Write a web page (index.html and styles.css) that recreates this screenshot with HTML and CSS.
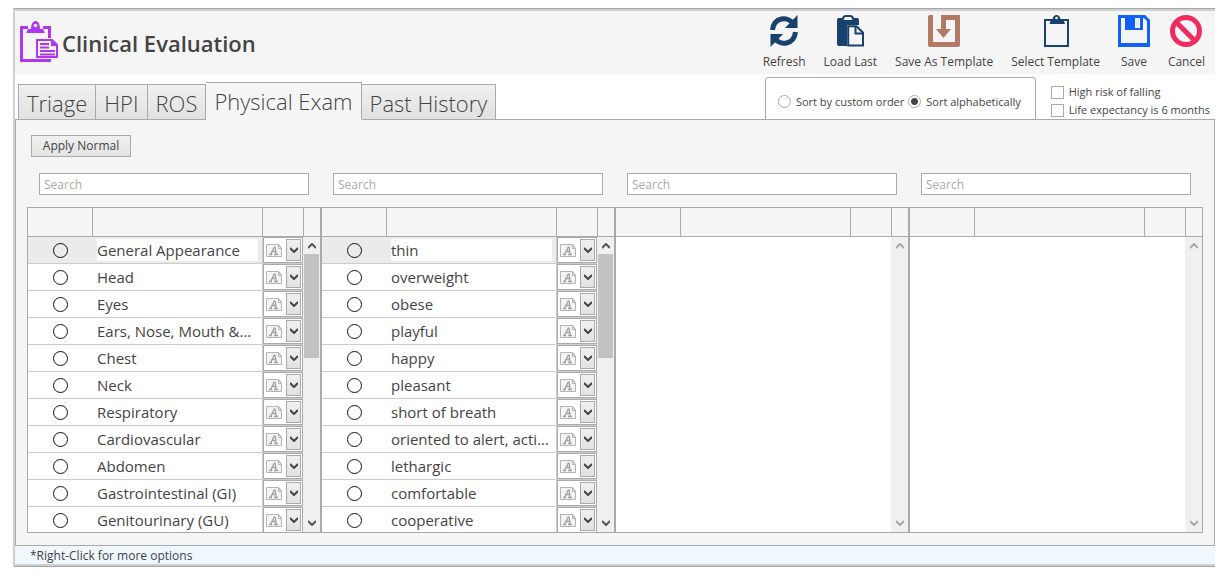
FILE: index.html
```
<!DOCTYPE html>
<html lang="en">
<head>
  <meta charset="UTF-8">
  <meta name="viewport" content="width=device-width, initial-scale=1.0">
  <title>Clinical Evaluation</title>
  <link rel="stylesheet" href="styles.css">
</head>
<body>
  <svg class="sprite" width="0" height="0">
    <symbol id="up" viewBox="0 0 8 6"><path d="M0 5 4 1 8 5" fill="none" stroke="currentColor" stroke-width="2"/></symbol>
    <symbol id="down" viewBox="0 0 8 6"><path d="M0 1 4 5 8 1" fill="none" stroke="currentColor" stroke-width="2"/></symbol>
    <symbol id="note" viewBox="0 0 17 13">
      <path d="M.5.5h12M.5.5v12h15v-8M12.5.5v4h3zM12.5.5l3 4" fill="#f4f4f4" stroke="#b4b4b4"/>
      <path d="M1 1h11v4h3v7H1z" fill="#f4f4f4"/>
      <path d="M3 10.500h3M8 10.500h4M4.500 10.500l4-8M9 2.500l1.200 8M6 7.500h4" fill="none" stroke="#a0a0a0" stroke-width="1.300"/>
    </symbol>
  </svg>

  <div class="window">
    <header class="header">
      <svg class="logo" viewBox="0 0 38 41" width="38" height="41">
        <path d="M0 5h8v3H3v30h28v3H0zM23 5h8v12h-3V8h-5z" fill="#b136f2"/>
        <path d="M6 12l2-4h3c0-4 1.500-8 4.500-8S20 4 20 8h3l2 4z" fill="#b136f2"/>
        <circle cx="15.500" cy="4.500" r="1.800" fill="#f5f5f5"/>
        <path d="M17 19h15l5 5v12H17z" fill="#f5f5f5" stroke="#b136f2" stroke-width="2"/>
        <path d="M31 18v7h7z" fill="#b136f2"/>
        <path d="M20 23h9M20 26.500h9M20 30h15M20 33.500h15" stroke="#b136f2" stroke-width="2"/>
      </svg>
      <h1>Clinical Evaluation</h1>

      <div class="toolbar">
        <button type="button">
          <svg viewBox="0 0 32 32">
            <g fill="none" stroke="#19416e" stroke-width="5"><path d="M4.500 15C6 2 20 1 25 8.500M27.500 17C26 30 12 31 7 23.500"/></g>
            <path d="M29.500 0v13H17zM2.500 32V19H15z" fill="#19416e"/>
          </svg>
          Refresh
        </button>
        <button type="button">
          <svg viewBox="0 0 32 32">
            <path d="M3 5q0-2 2-2h3q1-3 4-3h4q3 0 4 3h3q2 0 2 2v5H13v21H5q-2 0-2-2z" fill="#19416e"/>
            <path d="M9.500 5l1.500-3h6l1.500 3z" fill="#f5f5f5"/>
            <path d="M14.200 11.200h8.300l6.500 6.500v12.800H14.200z" fill="#f5f5f5" stroke="#19416e" stroke-width="2"/>
            <path d="M21.500 11v7.500h7.500" fill="none" stroke="#19416e" stroke-width="2"/>
          </svg>
          Load Last
        </button>
        <button type="button">
          <svg viewBox="0 0 32 32">
            <path d="M5 0v27h22V5h-9v9h5l-7.500 9L8 14h5V0h19v30q0 2-2 2H2q-2 0-2-2V2q0-2 2-2z" fill="#b27a66"/>
          </svg>
          Save As Template
        </button>
        <button type="button">
          <svg viewBox="0 0 32 32">
            <path d="M5 5h23v26H5z" fill="none" stroke="#19416e" stroke-width="2"/>
            <path d="M4 4h8.500Q13.500 0 16.500 0t4 4H29v2h-5l1 3H9.500l1-3H4z" fill="#19416e"/>
            <circle cx="16.500" cy="3" r="1.300" fill="#f5f5f5"/>
          </svg>
          Select Template
        </button>
        <button type="button">
          <svg viewBox="0 0 32 32">
            <path d="M0 0h27l5 5v27H0z" fill="#0f62f5"/>
            <path d="M3 3h4v12h18V3h1l3 3v22H3z" fill="#f5f5f5"/>
            <path d="M17 3h5v10h-5z" fill="#f5f5f5"/>
            <path d="M18.500 4.500h2v7h-2z" fill="#d8e4f8"/>
          </svg>
          Save
        </button>
        <button type="button">
          <svg viewBox="0 0 32 32">
            <path d="M5 6l21 21" stroke="#ef2b5f" stroke-width="5"/>
            <circle cx="16" cy="16" r="13.500" fill="none" stroke="#ef2b5f" stroke-width="5"/>
          </svg>
          Cancel
        </button>
      </div>
    </header>

    <div class="tab-row">
      <nav class="tabs" role="tablist">
        <button type="button" role="tab">Triage</button>
        <button type="button" role="tab">HPI</button>
        <button type="button" role="tab">ROS</button>
        <button type="button" role="tab" class="active" aria-selected="true">Physical Exam</button>
        <button type="button" role="tab">Past History</button>
      </nav>
      <div class="sort">
        <label><input type="radio" name="sort">Sort by custom order</label>
        <label><input type="radio" name="sort" checked>Sort alphabetically</label>
      </div>
      <div class="flags">
        <label><input type="checkbox">High risk of falling</label>
        <label><input type="checkbox">Life expectancy is 6 months</label>
      </div>
    </div>

    <main class="panel">
      <button type="button" class="apply">Apply Normal</button>
      <div class="columns" id="columns"></div>
    </main>

    <footer class="footer">*Right-Click for more options</footer>
  </div>

  <script>
    const lists = [
      ['General Appearance', 'Head', 'Eyes', 'Ears, Nose, Mouth &...', 'Chest', 'Neck', 'Respiratory',
        'Cardiovascular', 'Abdomen', 'Gastrointestinal (GI)', 'Genitourinary (GU)'],
      ['thin', 'overweight', 'obese', 'playful', 'happy', 'pleasant', 'short of breath',
        'oriented to alert, acti...', 'lethargic', 'comfortable', 'cooperative'],
      [],
      []
    ];

    const escapeText = (s) => s.replace(/&/g, '&amp;');
    const icon = (id, w, h) => `<svg class="${id}" width="${w}" height="${h}"><use href="#${id}"/></svg>`;

    const row = (name, col, i) => `
      <tr class="${i === 0 ? 'selected' : ''}">
        <td class="pick"><input type="radio" name="col${col}" id="c${col}r${i}"></td>
        <td class="name"><label for="c${col}r${i}">${escapeText(name)}</label></td>
        <td class="note-cell">
          <div class="combo">
            ${icon('note', 17, 13)}
            <span class="drop">
              <select aria-label="Note for ${escapeText(name)}"><option></option></select>
              ${icon('down', 8, 6)}
            </span>
          </div>
        </td>
      </tr>`;

    // One search box and one list per column
    document.getElementById('columns').innerHTML = lists.map((list, col) => `
      <section class="column">
        <input type="text" class="search" placeholder="Search" aria-label="Search list ${col + 1}">
        <div class="pane">
          <table>
            <thead><tr><th class="pick"></th><th></th><th class="note-cell"></th></tr></thead>
            <tbody>${list.map((name, i) => row(name, col, i)).join('')}</tbody>
          </table>
          <div class="side">
            <div class="side-head"></div>
            <div class="scrollbar ${list.length ? '' : 'disabled'}">
              ${icon('up', 8, 6)}
              <div class="track">${list.length ? '<div class="thumb"></div>' : ''}</div>
              ${icon('down', 8, 6)}
            </div>
          </div>
        </div>
      </section>`).join('');
  </script>
</body>
</html>
```
FILE: styles.css
```
* {
  box-sizing: border-box;
}

body {
  margin: 0;
  height: 100vh;
  padding: 8px 15px 13px 13px;
  background: #fff;
  color: #444;
  font-family: "Segoe UI", "Open Sans", "Noto Sans", sans-serif;
  font-size: 12px;
  line-height: 18px;
}

button,
input,
select {
  font: inherit;
  color: inherit;
  margin: 0;
}

.sprite {
  display: block;
}

.window {
  height: 100%;
  display: flex;
  flex-direction: column;
  border-left: 2px solid #d0d0d0;
  border-top: 1px solid #a6a6a6;
  border-bottom: 1px solid #a6a6a6;
}

/* Header */
.header {
  display: flex;
  height: 65px;
  padding: 0 10px 0 5px;
  border-top: 2px solid #d0d0d0;
  background: #f5f5f5;
}

.logo {
  margin-top: 10px;
}

h1 {
  flex: 1;
  margin: 16px 0 0 4px;
  font-size: 22px;
  line-height: 32px;
  font-weight: 600;
}

.toolbar {
  display: flex;
  gap: 18px;
  padding-top: 4px;
}

.toolbar button {
  display: flex;
  flex-direction: column;
  align-items: center;
  gap: 6px;
  padding: 0;
  border: 0;
  background: none;
  white-space: nowrap;
}

.toolbar svg {
  width: 32px;
  height: 32px;
}

/* Tabs */
.tab-row {
  display: flex;
  align-items: flex-end;
  height: 46px;
  padding-left: 3px;
}

.tabs {
  display: flex;
  align-items: flex-end;
  flex: 1;
}

.tabs button {
  height: 36px;
  padding: 0 8px;
  border: 1px solid #aaa;
  border-left-width: 0;
  background: linear-gradient(#f0f0f0, #e1e1e1);
  font-size: 22px;
  font-weight: 300;
  line-height: 36px;
  white-space: nowrap;
}

.tabs button:first-child {
  border-left-width: 1px;
}

.tabs .active {
  z-index: 1;
  height: 38px;
  border-bottom-color: #f5f5f5;
  background: #f5f5f5;
}

.sort {
  display: flex;
  align-items: center;
  gap: 4px;
  height: 43px;
  padding: 6px 14px 0 12px;
  border: 1px solid #aaa;
  border-radius: 3px 3px 0 0;
}

.sort label,
.flags label {
  display: flex;
  align-items: center;
  gap: 5px;
  font-size: 11px;
  white-space: nowrap;
}

.sort input,
.flags input {
  appearance: none;
  width: 13px;
  height: 13px;
  border: 1px solid #aaa;
  background: #fff;
}

.sort input {
  border-radius: 50%;
}

.sort input:checked {
  background: radial-gradient(#444 0 3px, #fff 4px);
}

.flags {
  padding: 0 5px 1px 15px;
}

/* Main panel */
.panel {
  flex: 1;
  min-height: 0;
  display: flex;
  flex-direction: column;
  align-items: flex-start;
  margin-top: -1px;
  padding: 15px 11px 12px;
  border: 1px solid #aaa;
  background: #f5f5f5;
}

.apply {
  width: 100px;
  height: 22px;
  margin: 0 0 16px 4px;
  padding: 0;
  border: 1px solid #aaa;
  background: linear-gradient(#f0f0f0, #e3e3e3);
}

.columns {
  flex: 1;
  min-height: 0;
  width: 100%;
  display: grid;
  grid-template-columns: repeat(4, 1fr);
}

.column {
  display: flex;
  flex-direction: column;
  min-width: 0;
  min-height: 0;
}

.search {
  height: 22px;
  margin: 0 12px 12px;
  padding: 0 4px;
  border: 1px solid #aaa;
  background: #fff;
}

.search::placeholder {
  color: #aaa;
}

.pane {
  flex: 1;
  min-height: 0;
  display: flex;
  align-items: flex-start;
  overflow: hidden;
  border: 1px solid #aaa;
  background: #fff;
}

table {
  flex: 1;
  width: 100%;
  min-width: 0;
  table-layout: fixed;
  border-collapse: separate;
  border-spacing: 0;
}

th {
  height: 29px;
  padding: 0;
  border-right: 1px solid #aaa;
  border-bottom: 1px solid #aaa;
  background: #f5f5f5;
}

th:last-child {
  border-right: 0;
}

td {
  height: 27px;
  padding: 0;
  border-bottom: 1px solid #ccc;
}

.pick {
  width: 65px;
  text-align: center;
}

.pick input {
  appearance: none;
  display: block;
  width: 15px;
  height: 15px;
  margin: 0 auto;
  border: 1px solid #111;
  border-radius: 50%;
}

.name {
  padding: 2px 4px;
  border-right: 1px solid #ccc;
}

.name label {
  display: block;
  overflow: hidden;
  font-size: 15px;
  line-height: 22px;
  text-overflow: ellipsis;
  white-space: nowrap;
}

.selected td {
  background: #ebebeb;
}

.selected label {
  background: #fff;
}

.note-cell {
  width: 40px;
}

.combo {
  display: flex;
  align-items: center;
  justify-content: space-between;
  height: 26px;
  padding: 0 1px 0 2px;
  border: 1px solid #aaa;
  background: #fff;
}

.drop {
  display: grid;
  place-items: center;
}

.drop > * {
  grid-area: 1 / 1;
}

.drop svg {
  pointer-events: none;
}

.drop select {
  appearance: none;
  width: 15px;
  height: 22px;
  padding: 0;
  border: 1px solid #aaa;
  border-radius: 0;
  background: linear-gradient(#f0f0f0, #e1e1e1);
}

/* Scrollbars */
.side {
  align-self: stretch;
  display: flex;
  flex-direction: column;
  width: 17px;
}

.side-head {
  height: 29px;
  border-left: 1px solid #aaa;
  border-bottom: 1px solid #aaa;
  background: #f5f5f5;
}

.scrollbar {
  flex: 1;
  display: flex;
  flex-direction: column;
  align-items: center;
  padding: 6px 0;
  background: #f0f0f0;
  color: #555;
}

.scrollbar.disabled {
  color: #aaa;
}

.track {
  flex: 1;
  align-self: stretch;
  padding: 5px 1px;
}

.thumb {
  height: 40%;
  background: #c2c2c2;
}

/* Footer */
.footer {
  height: 20px;
  padding-left: 15px;
  border-bottom: 2px solid #d0d0d0;
  background: #eff7ff;
  line-height: 20px;
}
```
